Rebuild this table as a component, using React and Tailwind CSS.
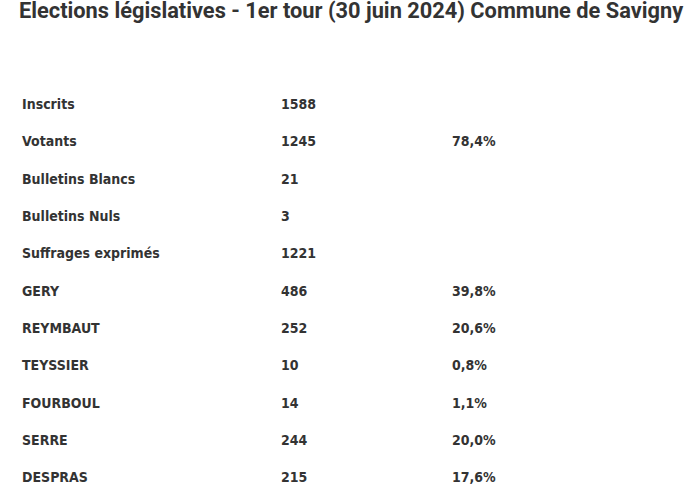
const rows = [
  ["Inscrits", "1588", ""],
  ["Votants", "1245", "78,4%"],
  ["Bulletins Blancs", "21", ""],
  ["Bulletins Nuls", "3", ""],
  ["Suffrages exprimés", "1221", ""],
  ["GERY", "486", "39,8%"],
  ["REYMBAUT", "252", "20,6%"],
  ["TEYSSIER", "10", "0,8%"],
  ["FOURBOUL", "14", "1,1%"],
  ["SERRE", "244", "20,0%"],
  ["DESPRAS", "215", "17,6%"],
];

export default function App() {
  return (
    <div className="w-[700px] h-[500px] overflow-hidden bg-white text-[#333] font-bold">
      <h1 className="pl-[19px] text-[21.8px] leading-[24px] -mt-[1px] whitespace-nowrap [font-family:Roboto,'DejaVu_Sans',sans-serif]">
        Elections législatives - 1er tour (30 juin 2024) Commune de Savigny
      </h1>
      <div className="mt-[63px] pl-[22px] text-[14px] [font-family:'DejaVu_Sans_Condensed','DejaVu_Sans',sans-serif]">
        {rows.map(([label, n, pct]) => (
          <div key={label} className="grid grid-cols-[259px_171px_1fr] h-[37.3px] items-center">
            <span>{label}</span>
            <span>{n}</span>
            <span>{pct}</span>
          </div>
        ))}
      </div>
    </div>
  );
}
